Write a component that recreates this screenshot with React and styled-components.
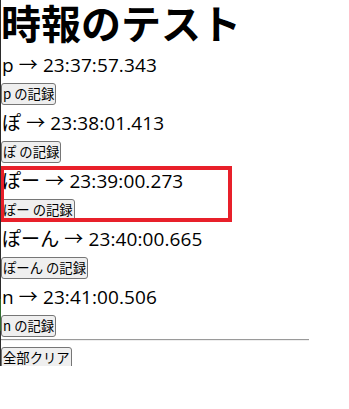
import React from "react";
import styled, { createGlobalStyle } from "styled-components";

const GlobalStyle = createGlobalStyle`
  html, body {
    margin: 0;
    padding: 0;
    background: #ffffff;
  }
  body {
    font-family: "Open Sans", "Noto Sans CJK JP", sans-serif;
    color: #000;
  }
`;

const Frame = styled.div`
  width: 308px;
  height: 366px;
  overflow: hidden;
  border-left: 1px solid #333;
  border-image: linear-gradient(
      to bottom,
      #2b2b2b 0 298px,
      #2f6b2f 298px 330px,
      #2b2b2b 330px
    )
    1;
  border-top: 0;
  border-right: 0;
  border-bottom: 0;
`;

const Title = styled.h1`
  margin: 0;
  height: 47px;
  font-family: "Noto Sans CJK JP", sans-serif;
  font-weight: 700;
  font-size: 40px;
  line-height: 44px;
  white-space: nowrap;
`;

const Entry = styled.div`
  position: relative;
  height: 58px;

  ${(p) =>
    p.$marked &&
    `
    &::after {
      content: "";
      position: absolute;
      left: -1px;
      top: 3px;
      width: 224px;
      height: 48px;
      border: 4px solid #e8202a;
      pointer-events: none;
    }
  `}
`;

const Stamp = styled.div`
  height: 36px;
  line-height: 36px;
  padding-left: 1px;
  font-size: 19px;
  letter-spacing: 0.1px;
  white-space: nowrap;
`;

const Button = styled.button`
  display: block;
  margin: 0;
  height: 22px;
  padding: 0 1px;
  font-family: "Noto Sans CJK JP", sans-serif;
  font-size: 13.33px;
  line-height: 18px;
  color: #000;
  background: #efefef;
  border: 1px solid #767676;
  border-radius: 3px;
`;

const Rule = styled.hr`
  margin: 2px 0 6px;
  border: 0;
  border-top: 1px solid #9a9a9a;
  border-bottom: 1px solid #eeeeee;
  height: 0;
`;

const records = [
  { name: "p", time: "23:37:57.343" },
  { name: "ぽ", time: "23:38:01.413" },
  { name: "ぽー", time: "23:39:00.273", marked: true },
  { name: "ぽーん", time: "23:40:00.665" },
  { name: "n", time: "23:41:00.506" },
];

export default function App() {
  return (
    <>
      <GlobalStyle />
      <Frame>
        <Title>時報のテスト</Title>
        {records.map((r) => (
          <Entry key={r.name} $marked={r.marked}>
            <Stamp>
              {r.name} → {r.time}
            </Stamp>
            <Button>{r.name} の記録</Button>
          </Entry>
        ))}
        <Rule />
        <Button>全部クリア</Button>
      </Frame>
    </>
  );
}
